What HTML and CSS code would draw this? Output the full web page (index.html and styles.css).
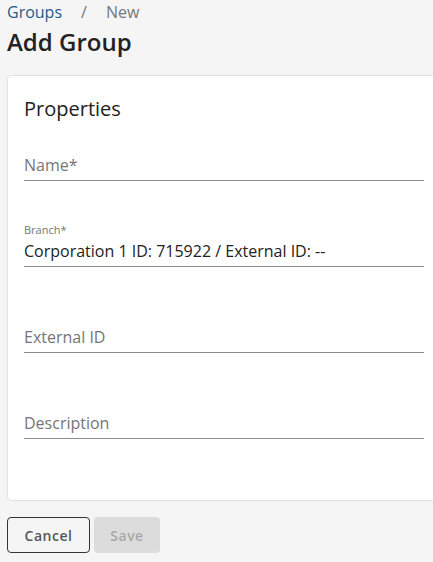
FILE: index.html
```html
<!DOCTYPE html>
<html lang="en">
<head>
    <meta charset="UTF-8">
    <meta name="viewport" content="width=device-width, initial-scale=1.0">
    <title>Add Group</title>
    <link rel="stylesheet" href="styles.css">
</head>
<body>
    <div class="page">
        <nav class="breadcrumb">
            <a href="#" class="crumb-link">Groups</a>
            <span class="crumb-sep">/</span>
            <span class="crumb-current">New</span>
        </nav>
        <h1 class="page-title">Add Group</h1>

        <!-- Properties card -->
        <div class="card">
            <h2 class="card-title">Properties</h2>

            <div class="field">
                <label class="field-label"></label>
                <input type="text" class="field-input" placeholder="Name*">
            </div>

            <div class="field">
                <label class="field-label">Branch*</label>
                <input type="text" class="field-input" value="Corporation 1 ID: 715922 / External ID: --">
            </div>

            <div class="field">
                <label class="field-label"></label>
                <input type="text" class="field-input" placeholder="External ID">
            </div>

            <div class="field">
                <label class="field-label"></label>
                <input type="text" class="field-input" placeholder="Description">
            </div>
        </div>

        <div class="actions">
            <button class="btn btn-outline">Cancel</button>
            <button class="btn btn-disabled" disabled>Save</button>
        </div>
    </div>
</body>
</html>
```

FILE: styles.css
```css
:root {
    --background-color: #f5f5f5;
    --card-color: #ffffff;
    --text-color: #222;
    --muted-color: #757575;
    --link-color: #1f5b8b;
    --line-color: #8c8c8c;
}

* {
    margin: 0;
    padding: 0;
    box-sizing: border-box;
    font-family: 'Open Sans', sans-serif;
}

body {
    background-color: var(--background-color);
    color: var(--text-color);
    overflow: hidden;
}

.page {
    padding: 0 7px;
    width: 448px;
}

.breadcrumb {
    font-size: 16px;
    line-height: 24px;
    display: flex;
}

.crumb-link {
    color: var(--link-color);
    text-decoration: none;
}

.crumb-sep {
    color: #777;
    margin: 0 19px;
}

.crumb-current {
    color: #777;
}

.page-title {
    font-size: 24px;
    font-weight: 600;
    line-height: 32px;
    margin-top: 2px;
    margin-bottom: 17px;
}

.card {
    background-color: var(--card-color);
    border: 1px solid #e2e2e2;
    border-radius: 4px;
    width: 434px;
    padding: 16px 16px 20px;
}

.card-title {
    font-size: 20px;
    font-weight: 400;
    line-height: 28px;
    margin-top: 3px;
    margin-bottom: 13px;
}

.field {
    display: flex;
    flex-direction: column;
    margin-bottom: 41px;
}

.field-label {
    font-size: 11px;
    line-height: 16px;
    height: 16px;
    color: var(--muted-color);
}

.field-input {
    border: none;
    border-bottom: 1px solid var(--line-color);
    background: transparent;
    font-size: 16px;
    height: 29px;
    padding-bottom: 2px;
    color: var(--text-color);
    outline: none;
}

.field-input::placeholder {
    color: var(--muted-color);
}

.actions {
    display: flex;
    gap: 4px;
    margin-top: 16px;
}

.btn {
    height: 36px;
    border-radius: 4px;
    font-size: 14px;
    font-weight: 600;
    letter-spacing: 0.5px;
    cursor: pointer;
}

.btn-outline {
    background: transparent;
    border: 1px solid #333;
    color: #555;
    width: 83px;
}

.btn-disabled {
    background-color: #dcdcdc;
    border: none;
    color: #a8a8a8;
    width: 66px;
    cursor: default;
}
```
